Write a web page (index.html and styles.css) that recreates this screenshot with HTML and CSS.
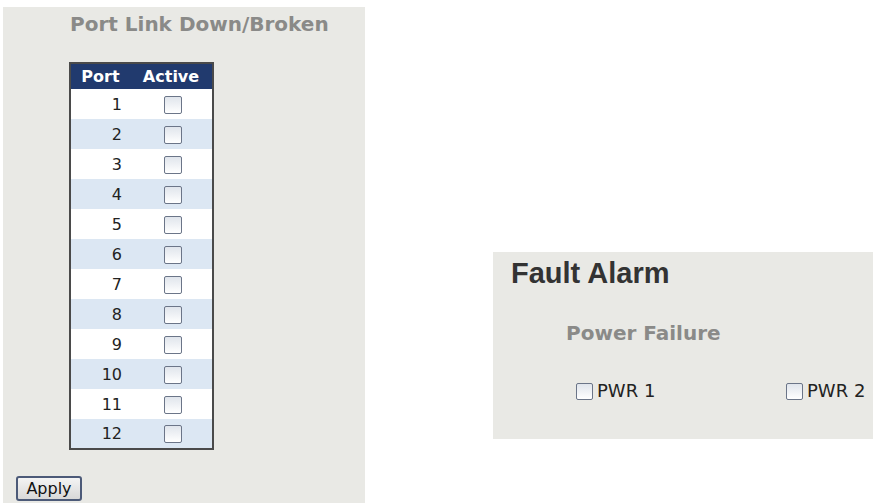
FILE: index.html
```html
<!DOCTYPE html>
<html lang="en">
<head>
	<meta charset="UTF-8">
	<title>Fault Alarm</title>
	<link rel="stylesheet" href="styles.css">
</head>
<body>
	<div class="panel panel-port">
		<h2 class="sub-title">Port Link Down/Broken</h2>
		<table class="port-table">
			<tr><th class="col-port">Port</th><th class="col-active">Active</th></tr>
			<tr><td class="num">1</td><td class="chk"><input type="checkbox"></td></tr>
			<tr><td class="num">2</td><td class="chk"><input type="checkbox"></td></tr>
			<tr><td class="num">3</td><td class="chk"><input type="checkbox"></td></tr>
			<tr><td class="num">4</td><td class="chk"><input type="checkbox"></td></tr>
			<tr><td class="num">5</td><td class="chk"><input type="checkbox"></td></tr>
			<tr><td class="num">6</td><td class="chk"><input type="checkbox"></td></tr>
			<tr><td class="num">7</td><td class="chk"><input type="checkbox"></td></tr>
			<tr><td class="num">8</td><td class="chk"><input type="checkbox"></td></tr>
			<tr><td class="num">9</td><td class="chk"><input type="checkbox"></td></tr>
			<tr><td class="num">10</td><td class="chk"><input type="checkbox"></td></tr>
			<tr><td class="num">11</td><td class="chk"><input type="checkbox"></td></tr>
			<tr><td class="num">12</td><td class="chk"><input type="checkbox"></td></tr>
		</table>
		<button class="btn-apply" type="button">Apply</button>
	</div>

	<div class="panel panel-fault">
		<h1 class="main-title">Fault Alarm</h1>
		<h2 class="sub-title power-title">Power Failure</h2>
		<div class="pwr-row">
			<label class="pwr"><input type="checkbox">PWR 1</label>
			<label class="pwr"><input type="checkbox">PWR 2</label>
		</div>
	</div>
</body>
</html>
```

FILE: styles.css
```css
*{
	margin: 0;
	padding: 0;
	box-sizing: border-box;
}
body{
	background-color: #ffffff;
	font-family: "DejaVu Sans", Verdana, sans-serif;
	display: flex;
	align-items: flex-start;
}
.panel{
	background-color: #e9e9e5;
}
.panel-port{
	width: 362px;
	height: 496px;
	margin: 7px 0 0 3px;
	padding: 5px 0 0 0;
}
.sub-title{
	font-size: 20px;
	line-height: 24px;
	font-weight: bold;
	color: #8a8a88;
}
.panel-port .sub-title{
	padding-left: 67px;
}

/* port table */
.port-table{
	margin: 26px 0 0 66px;
	width: 145px;
	border: 2px solid #4a4a4a;
	border-collapse: collapse;
	background-color: #ffffff;
}
.port-table th{
	height: 26px;
	background-color: #213a6e;
	color: #ffffff;
	font-size: 16px;
	font-weight: bold;
	text-align: center;
	padding: 0;
}
.col-port{
	width: 60px;
}
.port-table td{
	height: 30px;
	padding: 0;
}
.port-table tr:nth-child(odd) td{
	background-color: #dce7f3;
}
.num{
	text-align: right;
	padding-right: 8px !important;
	font-size: 16px;
	color: #222222;
}
.chk{
	text-align: center;
}
input[type=checkbox]{
	appearance: none;
	-webkit-appearance: none;
	width: 18px;
	height: 18px;
	border: 1px solid #6b7588;
	border-radius: 2px;
	background: linear-gradient(#e0e5ec, #ffffff);
	vertical-align: middle;
	margin: 0;
}
.chk input{
	margin-left: 3px;
}

.btn-apply{
	display: block;
	margin: 26px 0 0 13px;
	width: 66px;
	height: 25px;
	font-family: "DejaVu Sans", Verdana, sans-serif;
	font-size: 16px;
	color: #111111;
	background: linear-gradient(#f4f4f4, #d8d8d8);
	border: 2px solid #4c5a78;
	border-radius: 3px;
	line-height: 19px;
}

/* fault alarm box */
.panel-fault{
	width: 380px;
	height: 187px;
	margin: 252px 0 0 128px;
	padding: 4px 0 0 0;
}
.main-title{
	font-family: "Liberation Sans", Arial, sans-serif;
	font-size: 29px;
	line-height: 34px;
	font-weight: bold;
	color: #333333;
	padding-left: 18px;
}
.power-title{
	margin-top: 31px;
	padding-left: 73px;
}
.pwr-row{
	display: grid;
	grid-template-columns: 210px auto;
	margin-top: 37px;
	padding-left: 83px;
}
.pwr{
	display: flex;
	align-items: center;
	gap: 4px;
	font-size: 18px;
	color: #222222;
	line-height: 18px;
}
.pwr input{
	width: 17px;
	height: 17px;
}
```
